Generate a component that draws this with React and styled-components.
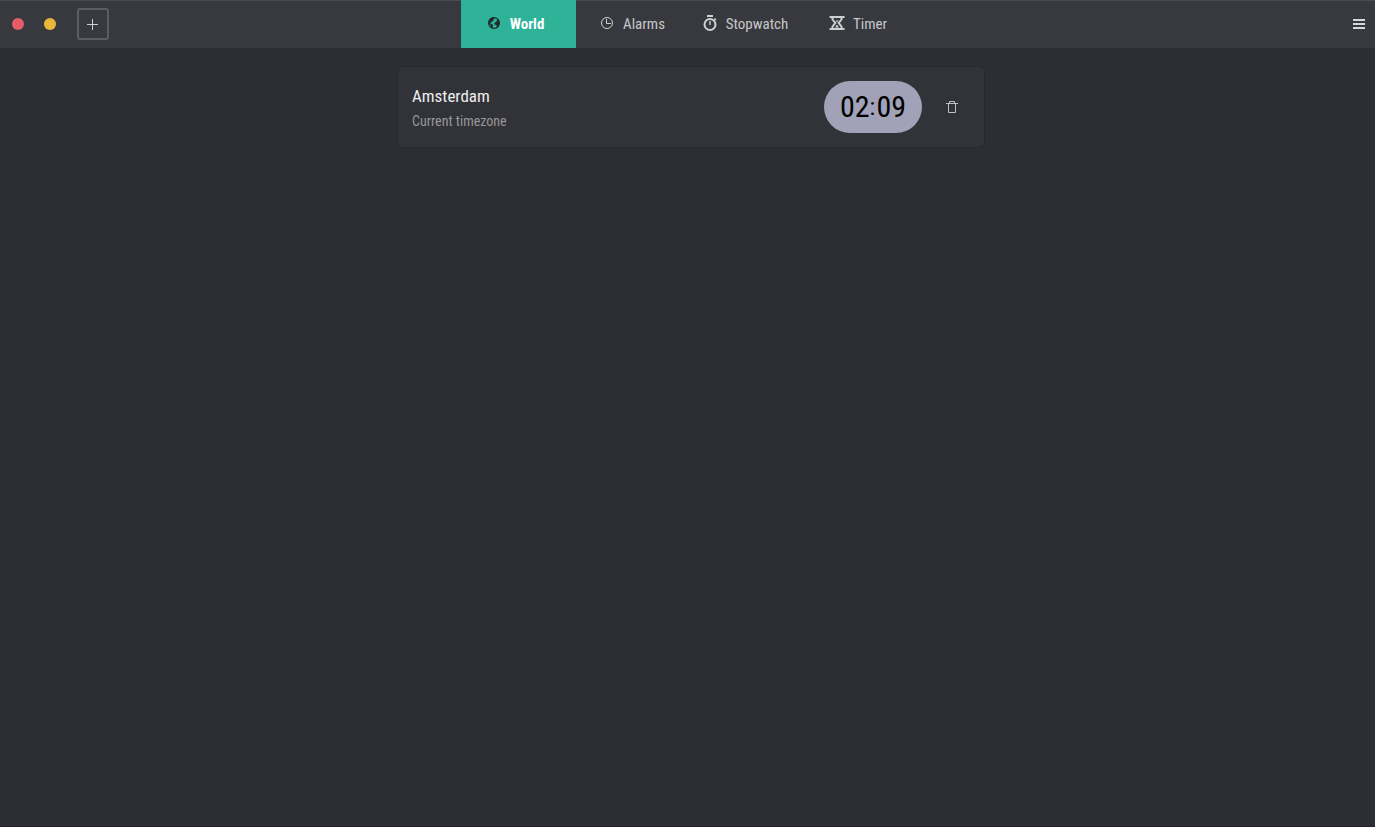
import React, { useState } from "react";
import styled, { createGlobalStyle } from "styled-components";

const GlobalStyle = createGlobalStyle`
  * { box-sizing: border-box; }
  body {
    margin: 0;
    background: #2d2e33;
    color: #c6c7c9;
    font-family: "Ubuntu Condensed", "Roboto Condensed", "Liberation Sans Narrow", "Liberation Sans", sans-serif;
    font-size: 15px;
  }
  button { font: inherit; color: inherit; background: none; border: 0; padding: 0; }
  svg { display: block; flex: none; }
`;

const Window = styled.div`
  display: flex;
  flex-direction: column;
  min-height: 100vh;
  border-bottom: 1px solid #232428;
`;

const HeaderBar = styled.header`
  display: grid;
  grid-template-columns: 1fr auto 1fr;
  height: 48px;
  background: linear-gradient(#4b4c52 1px, #38393e 1px);
`;

const HeaderStart = styled.div`
  display: flex;
  align-items: center;
  padding-left: 12px;
`;

const HeaderEnd = styled.div`
  display: flex;
  align-items: center;
  justify-content: flex-end;
  padding-right: 8px;
`;

const WindowButton = styled.button`
  width: 12px;
  height: 12px;
  margin-right: 20px;
  border-radius: 50%;
  background: ${(p) => p.$color};
`;

const AddButton = styled.button`
  display: grid;
  place-items: center;
  width: 32px;
  height: 32px;
  margin-left: 1px;
  border: 2px solid #5c5d62;
  border-radius: 3px;
`;

const IconButton = styled.button`
  display: grid;
  place-items: center;
`;

const Tabs = styled.nav`
  display: flex;
`;

const Tab = styled.button`
  display: flex;
  align-items: center;
  justify-content: center;
  gap: 8px;
  min-width: ${(p) => (p.$active ? 115 : 113)}px;
  height: 48px;
  padding: 0 ${(p) => (p.$active ? 6 : 0)}px 2px 0;
  line-height: 20px;
  color: ${(p) => (p.$active ? "#ffffff" : "#c6c7c9")};
  background: ${(p) => (p.$active ? "#2eb398" : "transparent")};
  font-weight: ${(p) => (p.$active ? 700 : 400)};
`;

const TabLabel = styled.span`
  padding-top: 2px;
`;

const Content = styled.main`
  display: flex;
  flex: 1;
  flex-direction: column;
  align-items: center;
  padding: 18px 0 18px 7px;
`;

const ClockCard = styled.article`
  display: flex;
  align-items: center;
  width: 100%;
  max-width: 588px;
  min-height: 82px;
  padding: 14px;
  border: 1px solid #27282c;
  border-radius: 6px;
  background: #323338;
`;

const Place = styled.div`
  flex: 1;
  padding-top: 2px;
`;

const City = styled.h2`
  margin: 0;
  font-size: 17px;
  font-weight: 400;
  line-height: 26px;
  color: #eeeeef;
`;

const Zone = styled.p`
  margin: 0;
  font-size: 14px;
  line-height: 24px;
  color: #96979a;
`;

const Time = styled.time`
  display: flex;
  align-items: center;
  justify-content: center;
  width: 98px;
  height: 52px;
  margin-right: 22px;
  border-radius: 26px;
  background: #a1a2b7;
  color: #000000;
  font-size: 30px;
  line-height: 52px;
`;

const Colon = styled.span`
  width: 7px;
  font-size: 24px;
`;

const DeleteButton = styled(IconButton)`
  width: 16px;
  height: 16px;
  margin-right: 10px;
`;

const GlobeIcon = () => (
  <svg width="16" height="16" viewBox="0 0 16 16">
    <circle cx="8" cy="8" r="5.4" fill="none" stroke="#222a2c" strokeWidth="1.2" />
    <path fill="#222a2c" d="M2.500 8 3 4.800 5.500 2.500 9 2.300 8.600 3.800 7.500 4.200 7.800 5.200 6.300 6.200 5.300 7.600 4.200 7.400 4.800 9 6.300 9.300 7.300 10.300 6.600 11.600 6.500 13.500 5 12.800 4.800 10.500 3.200 9ZM13.500 8 12.600 11 11 12.500 10.400 11.500 10.600 10 9 9.800 8.300 8.600 9 7.200 10.800 6.900 10.300 6 11 4.800 12.500 5Z" />
  </svg>
);

const ClockIcon = () => (
  <svg width="16" height="16" viewBox="0 0 16 16" fill="none" stroke="#cfd0d2">
    <circle cx="8" cy="8" r="5.5" />
    <path d="M7.5 4v4.5H12" />
  </svg>
);

const StopwatchIcon = () => (
  <svg width="16" height="16" viewBox="0 0 16 16" fill="none" stroke="#cfd0d2">
    <circle cx="8" cy="9.5" r="5.5" strokeWidth="2" />
    <path d="M5 1h6" strokeWidth="2" />
    <path d="M12.3 4.8l1.5-1" strokeWidth="2" />
    <path d="M8 6v4" strokeWidth="1.4" />
  </svg>
);

const HourglassIcon = () => (
  <svg width="16" height="16" viewBox="0 0 16 16" fill="none" stroke="#cfd0d2">
    <path d="M.5 2h15M.5 14h15" strokeWidth="2" />
    <path d="M3.500 2.500v2L6.300 8l-2.800 3.500v2M12.500 2.500v2L9.700 8l2.800 3.500v2" strokeWidth="2" />
    <path d="M6.500 5.500h3L8 7.500ZM8 9.500 10 12.500H6Z" fill="#cfd0d2" stroke="none" />
  </svg>
);

const PlusIcon = () => (
  <svg width="12" height="12" viewBox="0 0 12 12" stroke="#cfd0d2">
    <path d="M0 6.500h11M5.500 1v11" />
  </svg>
);

const MenuIcon = () => (
  <svg width="16" height="16" viewBox="0 0 16 16" stroke="#d3dadb" strokeWidth="2">
    <path d="M2 4h12M2 8h12M2 12h12" />
  </svg>
);

const TrashIcon = () => (
  <svg width="16" height="16" viewBox="0 0 16 16" fill="none" stroke="#bfc0c2">
    <path d="M2 4.500h12M4.500 4.500v9h7v-9M5.500 4V2.500h5V4" />
  </svg>
);

const tabs = [
  { name: "World", Icon: GlobeIcon },
  { name: "Alarms", Icon: ClockIcon },
  { name: "Stopwatch", Icon: StopwatchIcon },
  { name: "Timer", Icon: HourglassIcon },
];

export default function App() {
  const [active, setActive] = useState("World");
  return (
    <Window>
      <GlobalStyle />
      <HeaderBar>
        <HeaderStart>
          <WindowButton $color="#e55e66" aria-label="Close" />
          <WindowButton $color="#e9b838" aria-label="Minimize" />
          <AddButton aria-label="Add world clock"><PlusIcon /></AddButton>
        </HeaderStart>
        <Tabs aria-label="Views">
          {tabs.map(({ name, Icon }) => (
            <Tab
              key={name}
              type="button"
              aria-pressed={active === name}
              $active={active === name}
              onClick={() => setActive(name)}
            >
              <Icon />
              <TabLabel>{name}</TabLabel>
            </Tab>
          ))}
        </Tabs>
        <HeaderEnd>
          <IconButton aria-label="Menu"><MenuIcon /></IconButton>
        </HeaderEnd>
      </HeaderBar>
      <Content>
        <ClockCard>
          <Place>
            <City>Amsterdam</City>
            <Zone>Current timezone</Zone>
          </Place>
          <Time dateTime="02:09">
            <span>02</span>
            <Colon>:</Colon>
            <span>09</span>
          </Time>
          <DeleteButton aria-label="Delete Amsterdam"><TrashIcon /></DeleteButton>
        </ClockCard>
      </Content>
    </Window>
  );
}
